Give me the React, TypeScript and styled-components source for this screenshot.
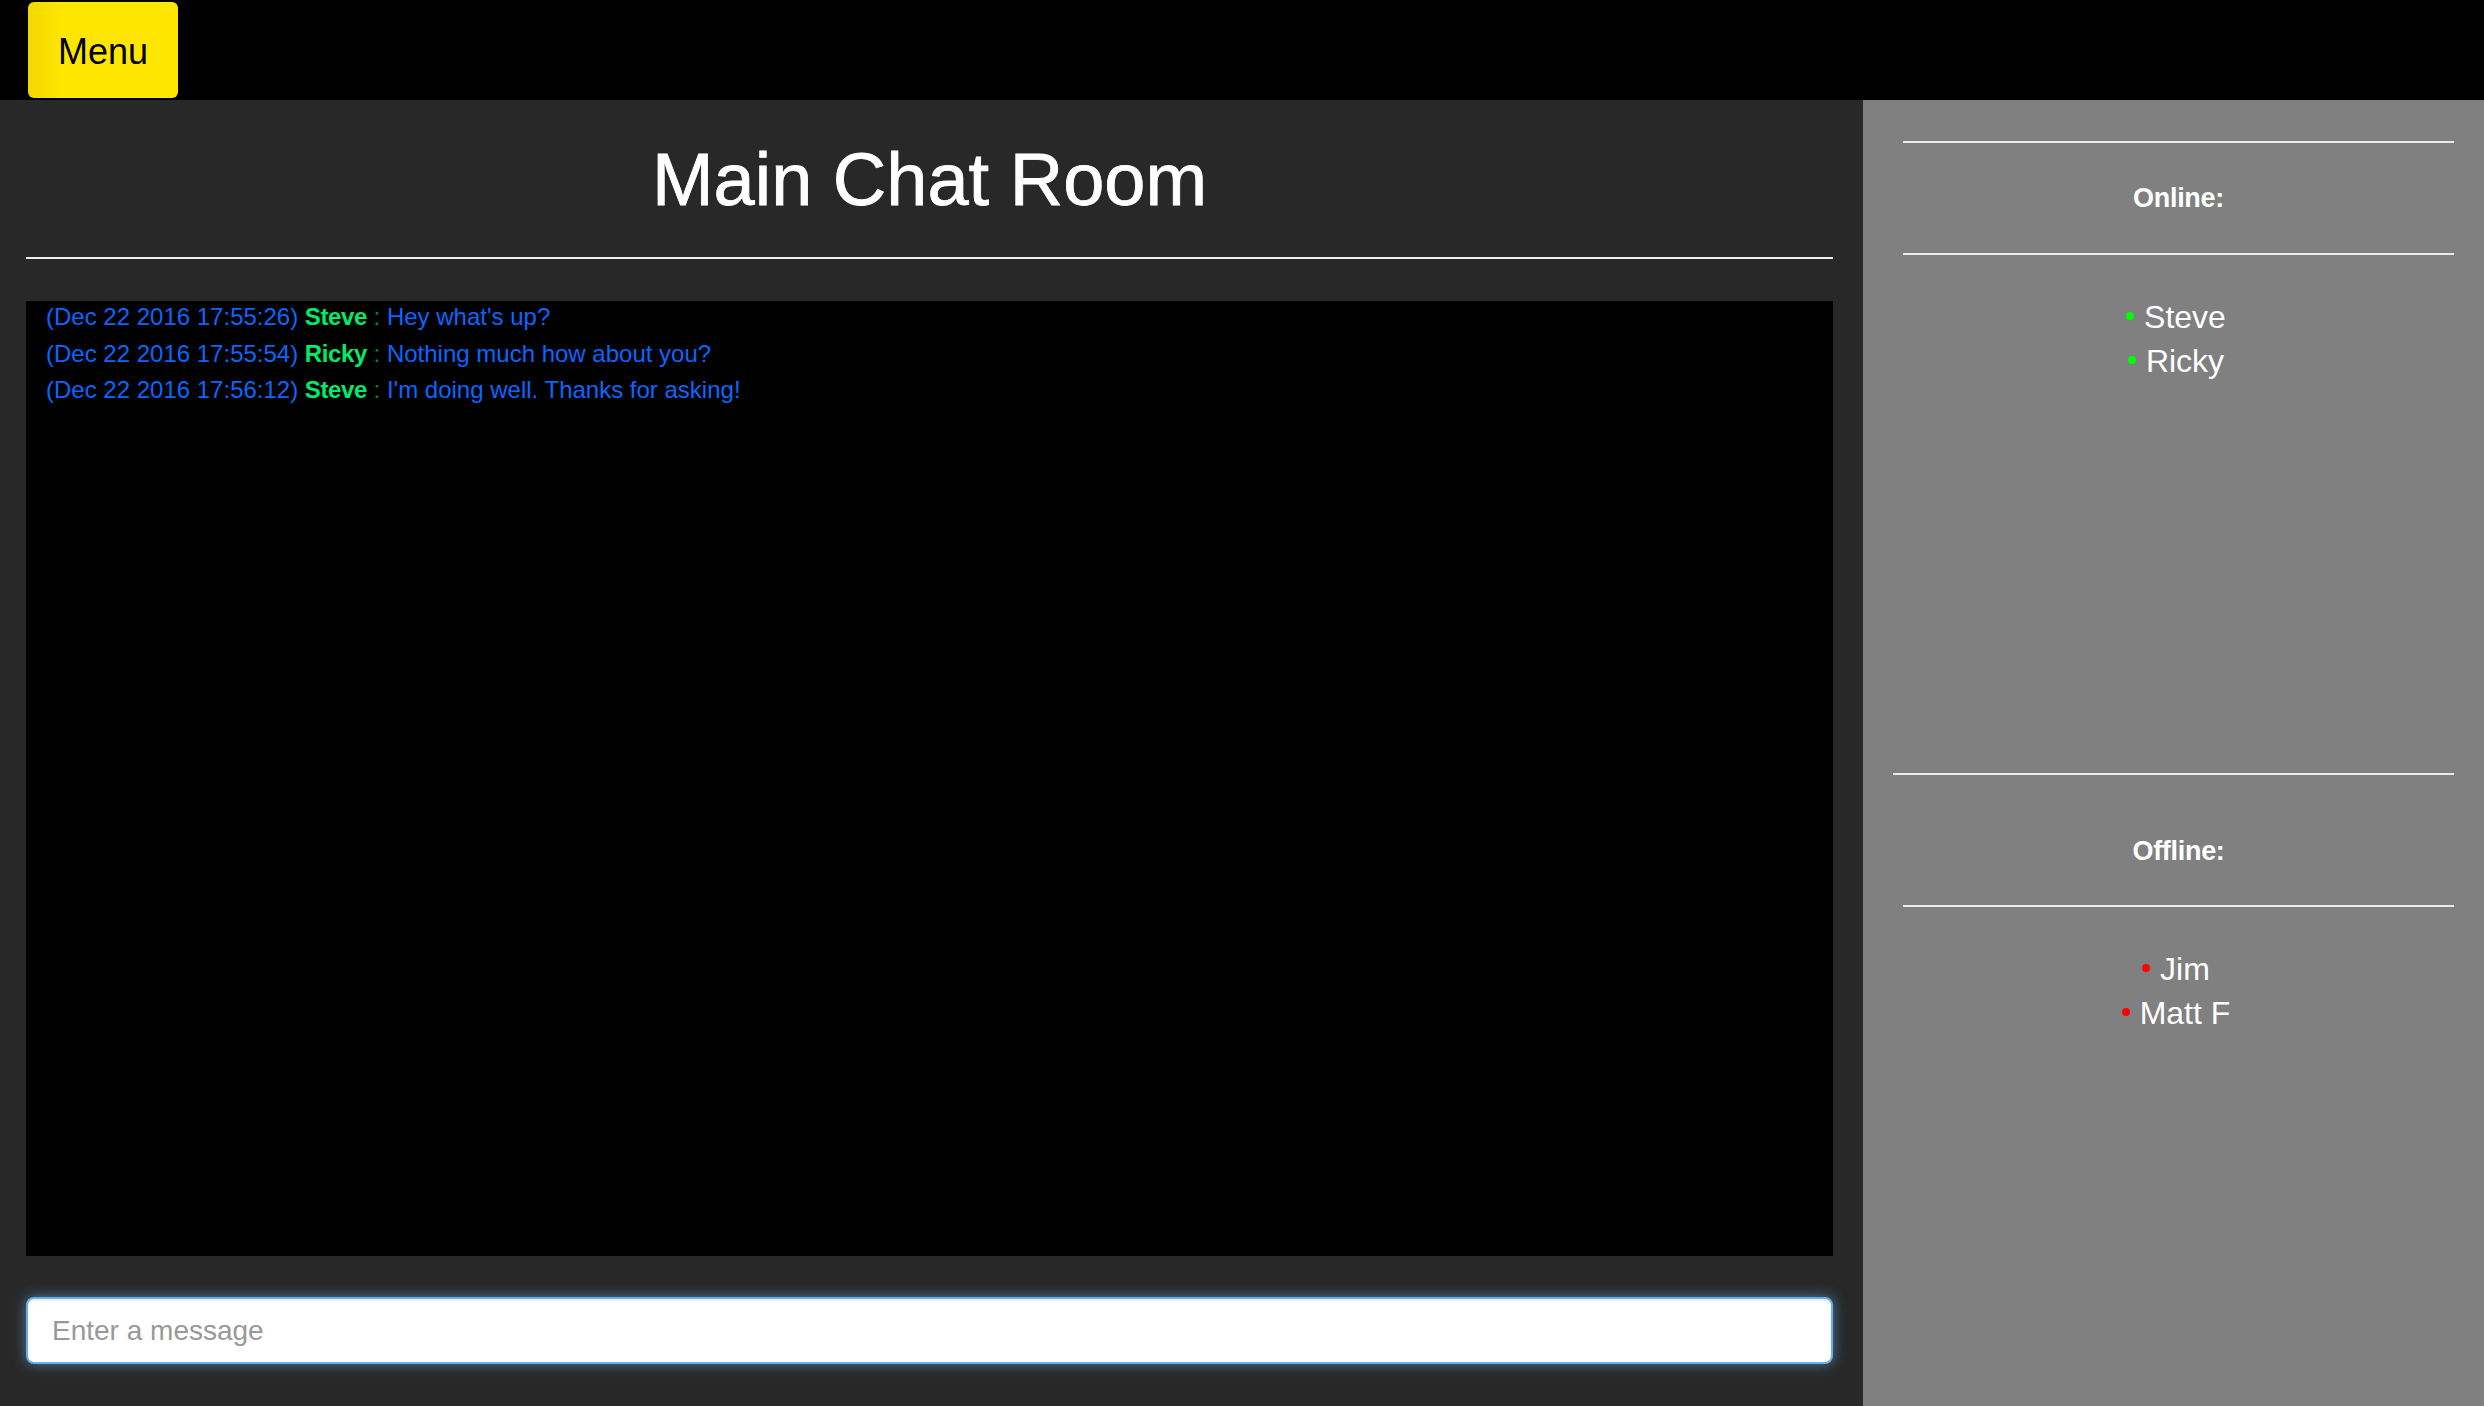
import React from "react";
import styled, { createGlobalStyle } from "styled-components";

const GlobalStyle = createGlobalStyle`
  html, body, #root { height: 100%; }
  body {
    margin: 0;
    background: #000;
    font-family: "Liberation Sans", Arial, Helvetica, sans-serif;
    overflow: hidden;
  }
  * { box-sizing: border-box; }
`;

const Page = styled.div`
  display: flex;
  flex-direction: column;
  height: 1406px;
`;

const TopBar = styled.header`
  height: 100px;
  flex: none;
  background: #000;
  display: flex;
  align-items: center;
  padding-left: 28px;
`;

const MenuButton = styled.button`
  width: 150px;
  height: 96px;
  border: 0;
  border-radius: 6px;
  background: linear-gradient(to right, #f0d700 0px, #ffe600 34px, #ffe600 100%);
  color: #000;
  font-family: "Liberation Sans", Arial, sans-serif;
  font-size: 36px;
  padding: 3px 0 0;
  cursor: pointer;
`;

const Body = styled.div`
  flex: 1;
  display: flex;
  min-height: 0;
`;

const Main = styled.main`
  width: 75%;
  background: #282828;
  padding: 0 30px 0 26px;
  display: flex;
  flex-direction: column;
`;

const Title = styled.h1`
  margin: 40px 0 0;
  font-size: 74px;
  line-height: 80px;
  font-weight: 500;
  color: #fff;
  text-align: center;
  -webkit-text-stroke: 0.8px #fff;
`;

const Divider = styled.hr`
  border: 0;
  height: 2px;
  background: #eeeeee;
  margin: 37px 0 42px;
`;

const ChatLog = styled.div`
  height: 955px;
  flex: none;
  background: #000;
  padding: 0 20px;
  font-size: 24px;
  line-height: 36.5px;
  color: #0a66ff;
  & > :first-child { margin-top: -2px; }
`;

const Message = styled.div`
  white-space: nowrap;
`;

const Sender = styled.span`
  color: #00ec66;
  font-weight: 700;
  letter-spacing: -0.4px;
`;

const Colon = styled.span`
  color: #0b8a14;
`;

const MessageInput = styled.input`
  margin-top: 41px;
  height: 67px;
  width: 100%;
  border: 2px solid #66afe9;
  border-radius: 8px;
  background: #fff;
  padding: 0 24px;
  font-family: "Liberation Sans", Arial, sans-serif;
  font-size: 28px;
  color: #555;
  outline: none;
  box-shadow: inset 0 2px 2px rgba(0, 0, 0, 0.075), 0 0 14px rgba(102, 175, 233, 0.6);
  &::placeholder { color: #999; }
`;

const Sidebar = styled.aside`
  width: 25%;
  background: #808080;
  padding: 0 30px 0 40px;
  display: flex;
  flex-direction: column;
`;

const Rule = styled.hr<{ $bleed?: number; $top?: number }>`
  border: 0;
  height: 2px;
  flex: none;
  background: #ebebeb;
  margin: ${(p) => p.$top ?? 0}px 0 0 ${(p) => -(p.$bleed ?? 0)}px;
`;

const SectionHeading = styled.h4<{ $top: number; $bottom: number }>`
  margin: 0;
  padding: ${(p) => p.$top}px 0 ${(p) => p.$bottom}px;
  font-size: 27px;
  line-height: 30px;
  font-weight: 700;
  color: #fff;
  text-align: center;
  letter-spacing: -0.3px;
`;

const UserList = styled.ul<{ $height?: number }>`
  list-style: none;
  margin: 0;
  padding: 40px 5px 0 0;
  ${(p) => (p.$height ? `height: ${p.$height}px; flex: none;` : "flex: 1;")}
  text-align: center;
  font-size: 32px;
  line-height: 44px;
  color: #fff;
`;

const UserItem = styled.li``;

const StatusDot = styled.span<{ $online: boolean }>`
  display: inline-block;
  width: 8px;
  height: 8px;
  border-radius: 50%;
  background: ${(p) => (p.$online ? "#00ff00" : "#ff0000")};
  margin-right: 10px;
  vertical-align: 8px;
`;

const messages = [
  { ts: "(Dec 22 2016 17:55:26)", name: "Steve", text: "Hey what's up?" },
  { ts: "(Dec 22 2016 17:55:54)", name: "Ricky", text: "Nothing much how about you?" },
  { ts: "(Dec 22 2016 17:56:12)", name: "Steve", text: "I'm doing well. Thanks for asking!" },
];

const online = ["Steve", "Ricky"];
const offline = ["Jim", "Matt F"];

export default function App() {
  return (
    <>
      <GlobalStyle />
      <Page>
        <TopBar>
          <MenuButton>Menu</MenuButton>
        </TopBar>
        <Body>
          <Main>
            <Title>Main Chat Room</Title>
            <Divider />
            <ChatLog>
              {messages.map((m, i) => (
                <Message key={i}>
                  {m.ts} <Sender>{m.name}</Sender>
                  <Colon> : </Colon>
                  {m.text}
                </Message>
              ))}
            </ChatLog>
            <MessageInput placeholder="Enter a message" />
          </Main>
          <Sidebar>
            <Rule $top={41} />
            <SectionHeading $top={40} $bottom={40}>Online:</SectionHeading>
            <Rule />
            <UserList $height={518}>
              {online.map((u) => (
                <UserItem key={u}>
                  <StatusDot $online />
                  {u}
                </UserItem>
              ))}
            </UserList>
            <Rule $bleed={10} />
            <SectionHeading $top={61} $bottom={39}>Offline:</SectionHeading>
            <Rule />
            <UserList>
              {offline.map((u) => (
                <UserItem key={u}>
                  <StatusDot $online={false} />
                  {u}
                </UserItem>
              ))}
            </UserList>
          </Sidebar>
        </Body>
      </Page>
    </>
  );
}
